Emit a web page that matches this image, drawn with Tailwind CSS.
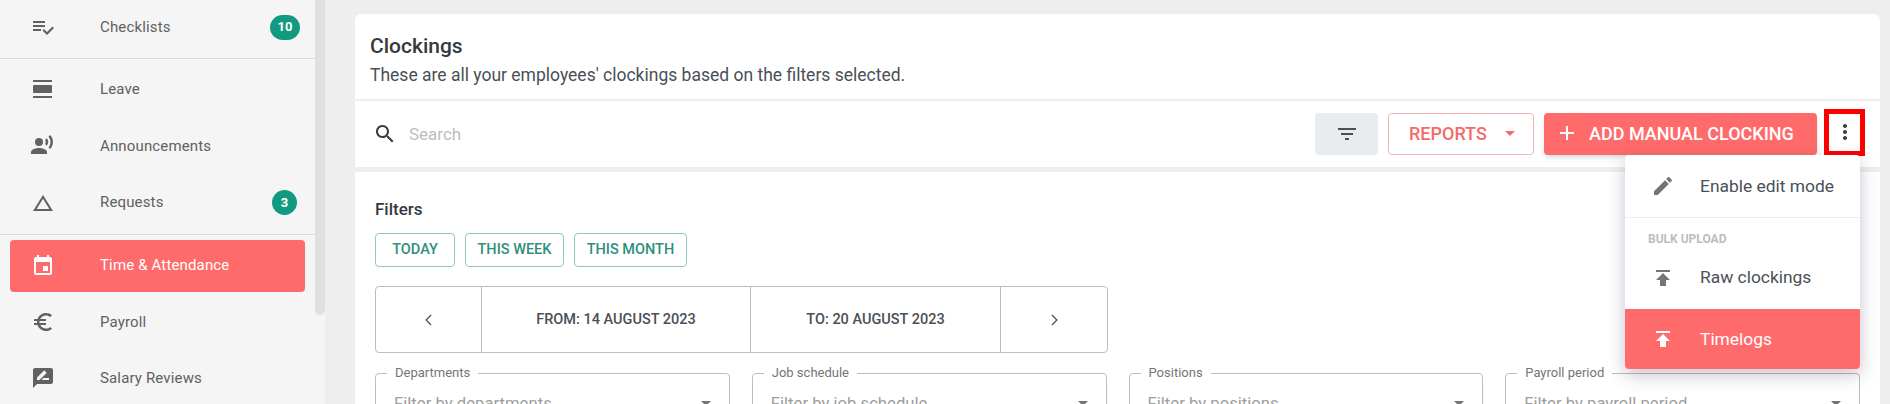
<!DOCTYPE html>
<html lang="en">
<head>
    <meta charset="UTF-8">
    <title>Clockings</title>
    <script src="https://cdn.jsdelivr.net/npm/@tailwindcss/browser@4"></script>
</head>
<body class="h-[404px] overflow-hidden bg-[#eeeeee] font-['Roboto',sans-serif]">
    <div class="flex h-[404px] overflow-hidden">
        <!-- Sidebar -->
        <aside class="w-[315px] h-[404px] shrink-0 bg-[#f5f5f5] text-[15px] tracking-[0.01em] text-[#616161]">
            <div class="flex items-center h-[58px] pl-[100px] pr-[15px] relative">
                <svg class="absolute left-[31px] top-[15px] w-6 h-6 fill-[#616161]" viewBox="0 0 24 24"><path d="M14 10H2v2h12v-2zm0-4H2v2h12V6zM2 16h8v-2H2v2zm19.5-4.5L23 13l-6.99 7-4.51-4.5L13 14l3.01 3 5.49-5.5z"/></svg>
                <span class="flex-1 -mt-1">Checklists</span>
                <span class="w-[30px] h-[25px] -mt-1 rounded-full bg-[#129a80] text-white text-[13px] font-bold flex items-center justify-center">10</span>
            </div>
            <div class="h-px bg-[#d9d9d9] mb-[2px]"></div>
            <div class="flex items-center h-[56px] pl-[100px] relative">
                <svg class="absolute left-[31px] top-[16px] w-6 h-6 fill-[#616161]" viewBox="0 0 24 24"><path d="M2 21h19v-2H2v2zM20 8H3c-.55 0-1 .45-1 1v6c0 .55.45 1 1 1h17c.55 0 1-.45 1-1V9c0-.55-.45-1-1-1zM2 3v2h19V3H2z"/></svg>
                <span>Leave</span>
            </div>
            <div class="flex items-center h-[58px] pl-[100px] relative">
                <svg class="absolute left-[30px] top-[16px] w-6 h-6 fill-[#616161]" viewBox="0 0 24 24"><circle cx="9" cy="9" r="4"/><path d="M9 15c-2.67 0-8 1.34-8 4v2h16v-2c0-2.66-5.33-4-8-4zm7.76-9.64l-1.68 1.69c.84 1.18.84 2.71 0 3.89l1.68 1.69c2.02-2.02 2.02-5.07 0-7.27zM20.07 2l-1.63 1.63c2.77 3.02 2.77 7.56 0 10.74L20.07 16c3.9-3.89 3.91-9.95 0-14z"/></svg>
                <span>Announcements</span>
            </div>
            <div class="flex items-center h-[55px] pl-[100px] pr-[18px] relative">
                <svg class="absolute left-[31px] top-[16px] w-6 h-6 fill-[#616161]" viewBox="0 0 24 24"><path d="M12 7.77L18.39 18H5.61L12 7.77M12 4L2 20h20L12 4z"/></svg>
                <span class="flex-1">Requests</span>
                <span class="w-[25px] h-[25px] rounded-full bg-[#129a80] text-white text-[13px] font-bold flex items-center justify-center">3</span>
            </div>
            <div class="h-px bg-[#d9d9d9] mt-1 mb-[5px]"></div>
            <div class="flex items-center h-[52px] mx-[10px] pl-[90px] rounded bg-[#ff6b6b] text-white relative">
                <svg class="absolute left-[21px] top-[14px] w-6 h-6 fill-white" viewBox="0 0 24 24"><path d="M17 12h-5v5h5v-5zM16 1v2H8V1H6v2H5c-1.11 0-1.99.9-1.99 2L3 19c0 1.1.89 2 2 2h14c1.1 0 2-.9 2-2V5c0-1.1-.9-2-2-2h-1V1h-2zm3 18H5V8h14v11z"/></svg>
                <span class="-mt-[2px]">Time &amp; Attendance</span>
            </div>
            <div class="flex items-center h-[56px] mt-[2px] pl-[100px] relative">
                <svg class="absolute left-[31px] top-[16px] w-6 h-6 fill-[#616161]" viewBox="0 0 24 24"><path d="M15 18.5c-2.51 0-4.68-1.42-5.76-3.5H15v-2H8.58c-.05-.33-.08-.66-.08-1s.03-.67.08-1H15V9H9.24C10.32 6.92 12.5 5.5 15 5.5c1.61 0 3.09.59 4.23 1.57L21 5.3C19.41 3.87 17.3 3 15 3c-3.92 0-7.24 2.51-8.48 6H3v2h3.06c-.04.33-.06.66-.06 1 0 .34.02.67.06 1H3v2h3.52c1.24 3.49 4.56 6 8.48 6 2.31 0 4.41-.87 6-2.3l-1.78-1.77c-1.13.98-2.6 1.57-4.2 1.57z"/></svg>
                <span>Payroll</span>
            </div>
            <div class="flex items-center h-[56px] pl-[100px] relative">
                <svg class="absolute left-[31px] top-[16px] w-6 h-6 fill-[#616161]" viewBox="0 0 24 24"><path d="M20 2H4c-1.1 0-1.99.9-1.99 2L2 22l4-4h14c1.1 0 2-.9 2-2V4c0-1.1-.9-2-2-2zM6 14v-2.47l6.88-6.88c.2-.2.51-.2.71 0l1.77 1.77c.2.2.2.51 0 .71L8.47 14H6zm12 0h-7.5l2-2H18v2z"/></svg>
                <span>Salary Reviews</span>
            </div>
        </aside>

        <!-- Sidebar scrollbar -->
        <div class="w-[10px] h-[404px] shrink-0 bg-[#f5f5f5]">
            <div class="h-[315px] bg-[#e0e0e0] rounded-b-md"></div>
        </div>

        <!-- Main -->
        <main class="flex-1 min-w-0 pl-[30px] pr-[10px] pt-[14px] relative">
            <section class="bg-white rounded-t-md h-[153px]">
                <div class="h-[87px] pl-[15px] pt-[20px] border-b-2 border-[#eeeeee]">
                    <h1 class="text-[21px] leading-[24px] font-medium text-[#343a40]">Clockings</h1>
                    <p class="mt-[7px] text-[17.5px] leading-[20px] text-[#495057]">These are all your employees' clockings based on the filters selected.</p>
                </div>
                <div class="flex items-start pt-[12px] pl-[18px] pr-[15px]">
                    <svg class="w-6 h-6 mt-[9px] fill-[#343a40]" viewBox="0 0 24 24"><path d="M15.5 14h-.79l-.28-.27C15.41 12.59 16 11.11 16 9.5 16 5.91 13.09 3 9.5 3S3 5.91 3 9.5 5.91 16 9.5 16c1.61 0 3.09-.59 4.23-1.57l.27.28v.79l5 4.99L20.49 19l-4.99-5zm-6 0C7.01 14 5 11.99 5 9.5S7.01 5 9.5 5 14 7.01 14 9.5 11.99 14 9.5 14z"/></svg>
                    <span class="flex-1 ml-[12px] mt-[11px] text-[17px] leading-[20px] text-[#bdbdbd]">Search</span>
                    <button class="flex items-center justify-center w-[63px] h-[42px] rounded bg-[#e9ecef]">
                        <svg class="w-6 h-6 fill-[#495057]" viewBox="0 0 24 24"><path d="M10 18h4v-2h-4v2zM3 6v2h18V6H3zm3 7h12v-2H6v2z"/></svg>
                    </button>
                    <button class="flex items-center w-[146px] h-[42px] ml-[10px] pl-[20px] pb-[2px] rounded border border-[#f2b5b5] text-[#f46a6a] text-[18px] font-medium">
                        REPORTS
                        <svg class="w-6 h-6 ml-[11px] fill-[#f46a6a]" viewBox="0 0 24 24"><path d="M7 10l5 5 5-5z"/></svg>
                    </button>
                    <button class="flex items-center w-[273px] h-[42px] ml-[10px] pl-[11px] pb-[2px] rounded bg-[#ff6b6b] text-white text-[18px] font-medium shadow-md">
                        <svg class="w-6 h-6 mr-[10px] fill-white" viewBox="0 0 24 24"><path d="M19 13h-6v6h-2v-6H5v-2h6V5h2v6h6v2z"/></svg>
                        ADD MANUAL CLOCKING
                    </button>
                    <button class="flex items-center justify-center w-[41px] h-[47px] ml-[7px] -mt-[4px] pb-[2px] border-[5px] border-[#ff0000] bg-white">
                        <svg class="w-6 h-6 fill-[#343a40]" viewBox="0 0 24 24"><path d="M12 8c1.1 0 2-.9 2-2s-.9-2-2-2-2 .9-2 2 .9 2 2 2zm0 2c-1.1 0-2 .9-2 2s.9 2 2 2 2-.9 2-2-.9-2-2-2zm0 6c-1.1 0-2 .9-2 2s.9 2 2 2 2-.9 2-2-.9-2-2-2z"/></svg>
                    </button>
                </div>
            </section>

            <section class="bg-white mt-[5px] px-[20px] pt-[27px] h-[300px]">
                <h2 class="text-[17px] leading-[20px] font-medium text-[#343a40]">Filters</h2>
                <div class="flex gap-[10px] mt-[14px]">
                    <button class="w-[80px] h-[34px] rounded border border-[#8fc9bd] text-[14.5px] font-medium text-[#2f8f7c]">TODAY</button>
                    <button class="w-[99px] h-[34px] rounded border border-[#8fc9bd] text-[14.5px] font-medium text-[#2f8f7c]">THIS WEEK</button>
                    <button class="w-[113px] h-[34px] rounded border border-[#8fc9bd] text-[14.5px] font-medium text-[#2f8f7c]">THIS MONTH</button>
                </div>
                <div class="flex w-[733px] h-[67px] mt-[19px] rounded border border-[#bdbdbd] text-[14.5px] font-medium text-[#495057]">
                    <div class="w-[106px] flex items-center justify-center border-r border-[#bdbdbd]">
                        <svg class="w-5 h-5 fill-none stroke-[#495057] stroke-[1.5]" viewBox="0 0 24 24"><path d="M14.5 6l-6 6 6 6"/></svg>
                    </div>
                    <div class="w-[269px] flex items-center justify-center border-r border-[#bdbdbd]">FROM: 14 AUGUST 2023</div>
                    <div class="w-[250px] flex items-center justify-center border-r border-[#bdbdbd]">TO: 20 AUGUST 2023</div>
                    <div class="flex-1 flex items-center justify-center">
                        <svg class="w-5 h-5 fill-none stroke-[#495057] stroke-[1.5]" viewBox="0 0 24 24"><path d="M9.5 6l6 6-6 6"/></svg>
                    </div>
                </div>
                <div class="grid grid-cols-4 gap-[22px] mt-[20px] text-[#9e9e9e]">
                    <div class="relative h-[58px] rounded border border-[#bdbdbd] pl-[18px] pt-[19px] text-[16.7px] leading-[22px]">
                        <span class="absolute left-[11px] -top-[9px] px-2 bg-white text-[13px] leading-[16px] text-[#757575]">Departments</span>
                        Filter by departments
                        <svg class="absolute right-[11px] top-[17px] w-6 h-6 fill-[#757575]" viewBox="0 0 24 24"><path d="M7 10l5 5 5-5z"/></svg>
                    </div>
                    <div class="relative h-[58px] rounded border border-[#bdbdbd] pl-[18px] pt-[19px] text-[16.7px] leading-[22px]">
                        <span class="absolute left-[11px] -top-[9px] px-2 bg-white text-[13px] leading-[16px] text-[#757575]">Job schedule</span>
                        Filter by job schedule
                        <svg class="absolute right-[11px] top-[17px] w-6 h-6 fill-[#757575]" viewBox="0 0 24 24"><path d="M7 10l5 5 5-5z"/></svg>
                    </div>
                    <div class="relative h-[58px] rounded border border-[#bdbdbd] pl-[18px] pt-[19px] text-[16.7px] leading-[22px]">
                        <span class="absolute left-[11px] -top-[9px] px-2 bg-white text-[13px] leading-[16px] text-[#757575]">Positions</span>
                        Filter by positions
                        <svg class="absolute right-[11px] top-[17px] w-6 h-6 fill-[#757575]" viewBox="0 0 24 24"><path d="M7 10l5 5 5-5z"/></svg>
                    </div>
                    <div class="relative h-[58px] rounded border border-[#bdbdbd] pl-[18px] pt-[19px] text-[16.7px] leading-[22px]">
                        <span class="absolute left-[11px] -top-[9px] px-2 bg-white text-[13px] leading-[16px] text-[#757575]">Payroll period</span>
                        Filter by payroll period
                        <svg class="absolute right-[11px] top-[17px] w-6 h-6 fill-[#757575]" viewBox="0 0 24 24"><path d="M7 10l5 5 5-5z"/></svg>
                    </div>
                </div>
            </section>

            <!-- Actions menu -->
            <div class="absolute left-[1300px] top-[155px] w-[235px] h-[214px] bg-white rounded shadow-[0_6px_18px_rgba(60,40,90,0.28)] text-[17.4px] text-[#495057]">
                <div class="flex items-center h-[63px] pl-[75px] border-b border-[#eeeeee] relative">
                    <svg class="absolute left-[26px] top-[19px] w-6 h-6 fill-[#757575]" viewBox="0 0 24 24"><path d="M3 17.25V21h3.75L17.81 9.94l-3.75-3.75L3 17.25zM20.71 7.04c.39-.39.39-1.02 0-1.41l-2.34-2.34c-.39-.39-1.02-.39-1.41 0l-1.83 1.83 3.75 3.75 1.83-1.83z"/></svg>
                    <span>Enable edit mode</span>
                </div>
                <div class="pl-[23px] pt-[14px] text-[12px] leading-[14px] font-bold text-[#bdbdbd]">BULK UPLOAD</div>
                <div class="flex items-center h-[63px] pl-[75px] relative">
                    <svg class="absolute left-[26px] top-[20px] w-6 h-6 fill-[#757575]" viewBox="0 0 24 24"><path d="M5 4v2h14V4H5zm0 10h4v6h6v-6h4l-7-7-7 7z"/></svg>
                    <span>Raw clockings</span>
                </div>
                <div class="flex items-center h-[60px] pl-[75px] rounded-b bg-[#ff6b6b] text-white relative">
                    <svg class="absolute left-[26px] top-[18px] w-6 h-6 fill-white" viewBox="0 0 24 24"><path d="M5 4v2h14V4H5zm0 10h4v6h6v-6h4l-7-7-7 7z"/></svg>
                    <span>Timelogs</span>
                </div>
            </div>
        </main>
    </div>
</body>
</html>
